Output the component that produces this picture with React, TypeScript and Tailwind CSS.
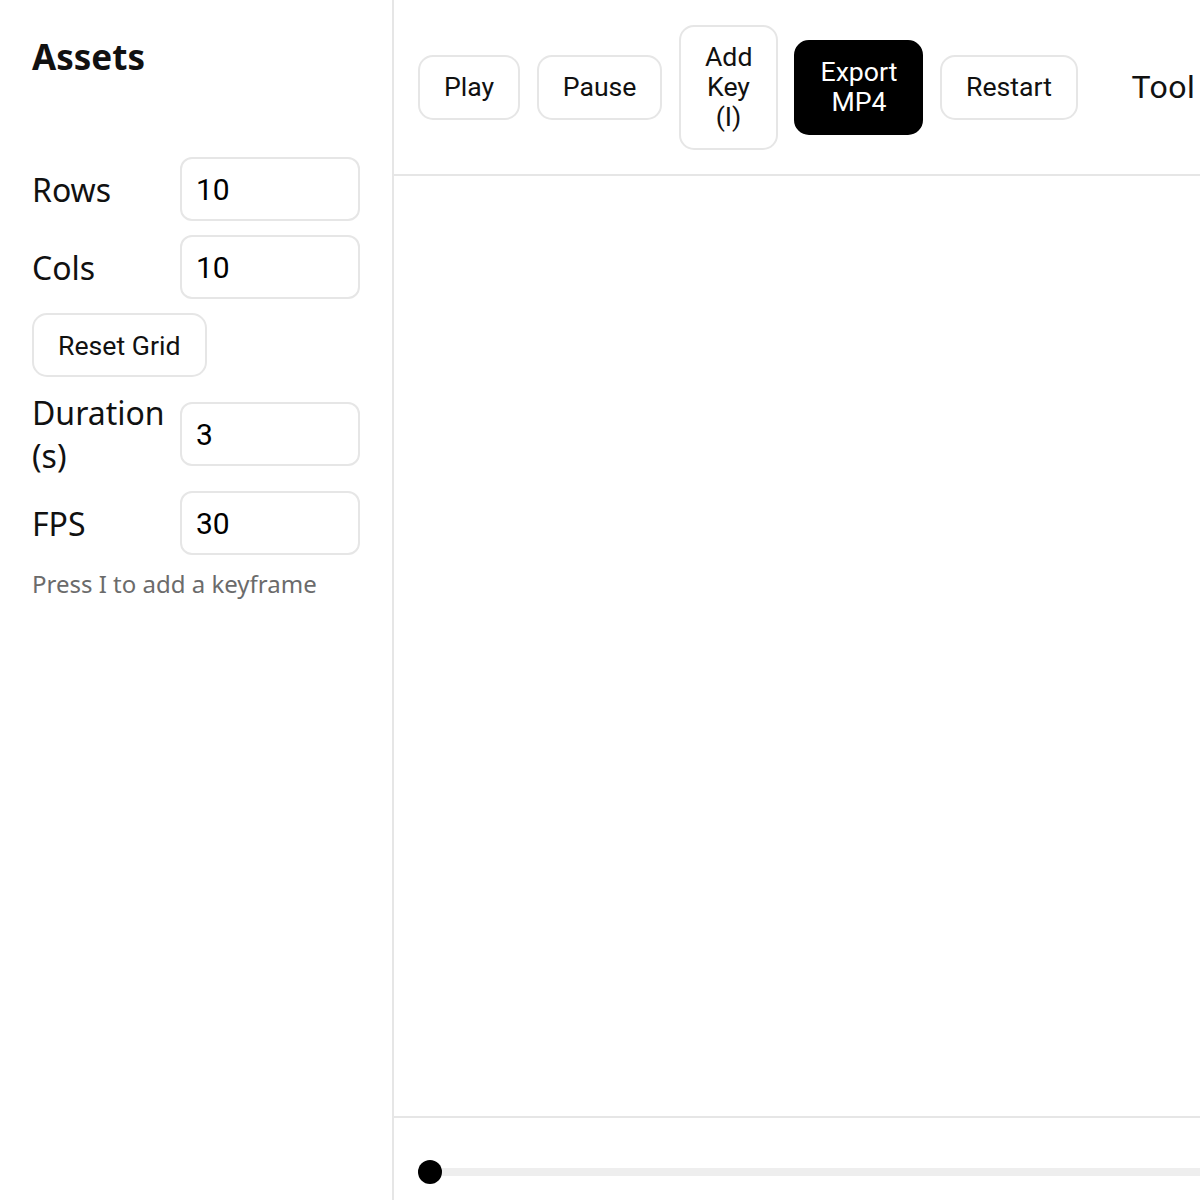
import React from "react";

const labelCls = "text-[32px] leading-[43px] text-[#111111] font-['Noto_Sans',sans-serif] min-w-0 whitespace-normal";
const inputCls =
  "w-[180px] h-[64px] box-border border-2 border-[#e6e6e6] rounded-[12px] pl-[14px] text-[30px] text-black font-['Roboto',sans-serif] outline-none bg-white";
const btnBase =
  "box-border border-2 rounded-[15px] px-[24px] py-[15.5px] text-[26.67px] leading-[30px] font-['Roboto',sans-serif] shrink-0";
const btnLight = btnBase + " border-[#e6e6e6] bg-white text-[#111111]";
const btnDark = btnBase + " border-black bg-black text-white";

export default function App() {
  return (
    <div className="w-[1200px] h-[1200px] overflow-hidden flex bg-white">
      <aside className="w-[394px] shrink-0 h-full border-r-2 border-[#e6e6e6] box-border px-[32px] pt-[32px] font-['Noto_Sans',sans-serif]">
        <h2 className="text-[35px] leading-[50px] font-bold text-[#111111] m-0 mb-[75px]">Assets</h2>
        <div className="flex flex-col gap-[14px]">
          <div className="grid grid-cols-[minmax(0,1fr)_180px] gap-x-[16px] items-center">
            <label className={labelCls}>Rows</label>
            <input className={inputCls} defaultValue="10" />
          </div>
          <div className="grid grid-cols-[minmax(0,1fr)_180px] gap-x-[16px] items-center">
            <label className={labelCls}>Cols</label>
            <input className={inputCls} defaultValue="10" />
          </div>
          <div>
            <button className={btnLight + " h-[64px] py-0"}>Reset Grid</button>
          </div>
          <div className="grid grid-cols-[minmax(0,1fr)_180px] gap-x-[16px] items-center">
            <label className={labelCls}>Duration (s)</label>
            <input className={inputCls} defaultValue="3" />
          </div>
          <div className="grid grid-cols-[minmax(0,1fr)_180px] gap-x-[16px] items-center">
            <label className={labelCls}>FPS</label>
            <input className={inputCls} defaultValue="30" />
          </div>
          <p className="text-[24px] leading-[34px] text-[#6b6b6b] m-0 -mt-[2px]">Press I to add a keyframe</p>
        </div>
      </aside>
      <main className="flex-1 min-w-0 flex flex-col h-full overflow-hidden">
        <div className="h-[176px] shrink-0 box-border border-b-2 border-[#e6e6e6] flex items-center gap-[16.5px] px-[24px] overflow-hidden">
          <button className={btnLight}>Play</button>
          <button className={btnLight}>Pause</button>
          <button className={btnLight + " w-[99px] px-0"}>Add Key (I)</button>
          <button className={btnDark + " w-[129px] px-0"}>Export MP4</button>
          <button className={btnLight}>Restart</button>
          <span className="ml-[37px] text-[32px] tracking-[0.5px] text-[#111111] font-['Roboto',sans-serif] whitespace-nowrap">Tool</span>
        </div>
        <div className="flex-1 min-h-0 border-b-2 border-[#e6e6e6] box-border bg-white" />
        <div className="h-[82px] shrink-0 flex items-start pl-[24px] pt-[50px] box-border">
          <div className="relative w-[calc(100%+40px)] shrink-0 h-[8px] rounded-full bg-[#eeeeee]">
            <div className="absolute left-0 top-1/2 -translate-y-1/2 w-[24px] h-[24px] rounded-full bg-black" />
          </div>
        </div>
      </main>
    </div>
  );
}
